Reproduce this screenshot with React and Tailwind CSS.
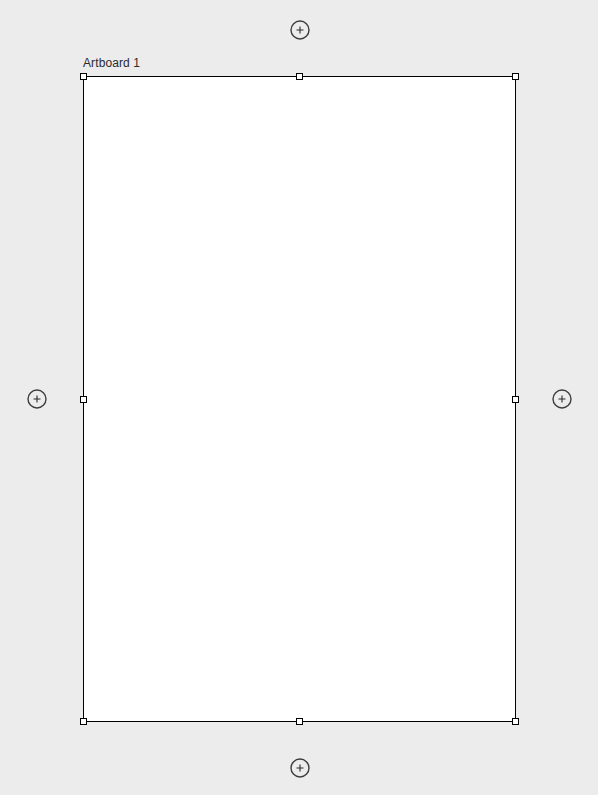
import React from "react";

function PlusButton() {
  return (
    <button className="w-5 h-5 flex items-center justify-center cursor-pointer" aria-label="Add artboard">
      <svg width="20" height="20" viewBox="0 0 20 20" fill="none">
        <circle cx="10" cy="10" r="9" stroke="#3d3d3d" strokeWidth="1.4" />
        <path d="M10 6.5v7M6.5 10h7" stroke="#2a2a2a" strokeWidth="1.1" />
      </svg>
    </button>
  );
}

function Handle({ className }) {
  return <div className={`absolute w-[7px] h-[7px] bg-white border border-black ${className}`} />;
}

export default function App() {
  return (
    <div
      className="w-[598px] h-[795px] bg-[#ececec] grid grid-cols-[83px_433px_1fr] grid-rows-[76px_646px_1fr] overflow-hidden"
      style={{ fontFamily: '"Liberation Sans", Arial, sans-serif' }}
    >
      <div />
      <div className="flex flex-col">
        <div className="flex justify-center pt-5">
          <PlusButton />
        </div>
        <div className="mt-auto pb-[6px] text-[12px] leading-[13px] tracking-[0.1px] text-[#2b2b2b]">Artboard 1</div>
      </div>
      <div />

      <div className="flex items-center pl-[27px]">
        <PlusButton />
      </div>
      <div className="relative bg-white border border-black">
        <Handle className="-left-1 -top-1" />
        <Handle className="left-[212px] -top-1" />
        <Handle className="-right-1 -top-1" />
        <Handle className="-left-1 top-[319px]" />
        <Handle className="-right-1 top-[319px]" />
        <Handle className="-left-1 -bottom-1" />
        <Handle className="left-[212px] -bottom-1" />
        <Handle className="-right-1 -bottom-1" />
      </div>
      <div className="flex items-center pl-[36px]">
        <PlusButton />
      </div>

      <div />
      <div className="flex justify-center pt-9">
        <PlusButton />
      </div>
      <div />
    </div>
  );
}
